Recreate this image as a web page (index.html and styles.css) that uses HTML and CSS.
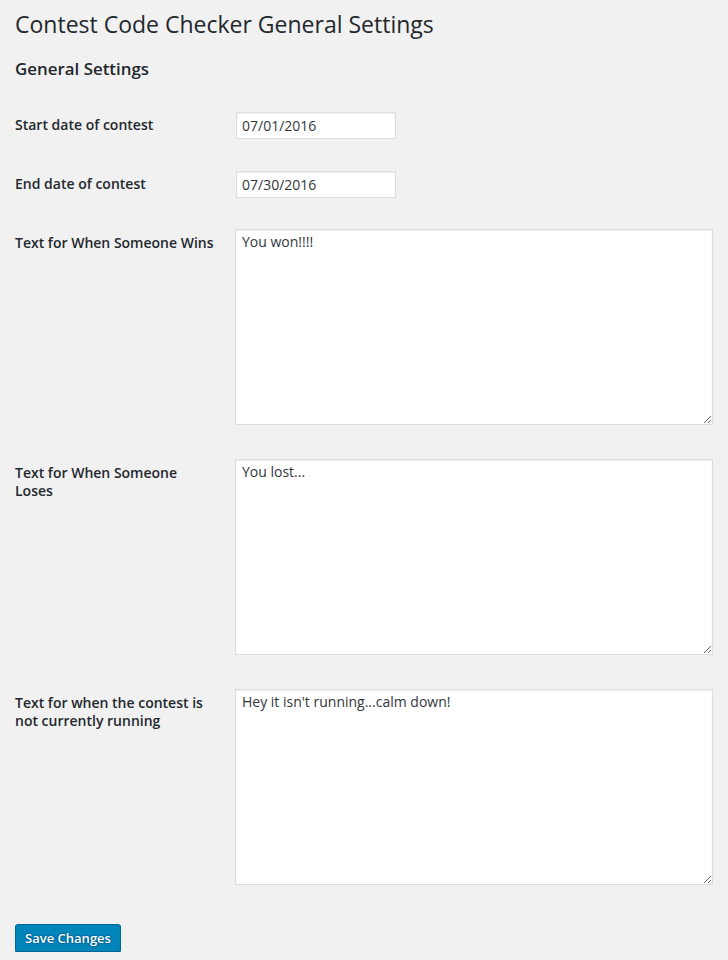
FILE: index.html
```html
<!DOCTYPE html>
<html lang="en">
<head>
<meta charset="utf-8">
<title>Contest Code Checker General Settings</title>
<link rel="stylesheet" href="styles.css">
</head>
<body>
<div class="wrap">
  <h1 class="page-title">Contest Code Checker General Settings</h1>
  <form class="settings-form">
    <h2 class="section-title">General Settings</h2>
    <div class="form-rows">
      <div class="form-row">
        <label class="field-label" for="start">Start date of contest</label>
        <input class="text-input" id="start" type="text" value="07/01/2016">
      </div>
      <div class="form-row">
        <label class="field-label" for="end">End date of contest</label>
        <input class="text-input" id="end" type="text" value="07/30/2016">
      </div>
      <div class="form-row form-row-area">
        <label class="field-label" for="win">Text for When Someone Wins</label>
        <textarea class="text-area" id="win">You won!!!!</textarea>
      </div>
      <div class="form-row form-row-area">
        <label class="field-label" for="lose">Text for When Someone Loses</label>
        <textarea class="text-area" id="lose">You lost...</textarea>
      </div>
      <div class="form-row form-row-area">
        <label class="field-label" for="idle">Text for when the contest is not currently running</label>
        <textarea class="text-area" id="idle">Hey it isn't running...calm down!</textarea>
      </div>
    </div>
    <div class="submit-row">
      <button class="button-primary" type="button">Save Changes</button>
    </div>
  </form>
</div>
</body>
</html>
```

FILE: styles.css
```css
html, body {
  margin: 0;
  padding: 0;
  background: #f1f1f1;
}

body {
  font-family: "Open Sans", "Noto Sans", sans-serif;
  color: #23282d;
  font-size: 14px;
}

.wrap {
  padding: 9px 0 0 15px;
}

.page-title {
  margin: 0;
  font-size: 23px;
  font-weight: 400;
  line-height: 30px;
  color: #23282d;
}

.settings-form {
  margin: 0;
}

.section-title {
  margin: 18px 0 0 0;
  font-size: 16.9px;
  font-weight: 600;
  line-height: 24px;
  color: #23282d;
}

.form-rows {
  margin-top: 15px;
  display: flex;
  flex-direction: column;
}

.form-row {
  display: flex;
  align-items: flex-start;
  height: 59px;
}

.form-row-area {
  height: 230px;
}

.field-label {
  flex: 0 0 200px;
  width: 200px;
  padding: 20px 20px 0 0;
  font-size: 14px;
  font-weight: 600;
  line-height: 18.2px;
  color: #23282d;
}

.text-input {
  box-sizing: border-box;
  width: 160px;
  height: 27px;
  margin: 16px 0 0 1px;
  padding: 0 5px;
  border: 1px solid #dddddd;
  background: #ffffff;
  box-shadow: inset 0 1px 2px rgba(0, 0, 0, 0.07);
  font-family: "Open Sans", "Noto Sans", sans-serif;
  font-size: 14px;
  color: #32373c;
  outline: none;
  border-radius: 0;
}

.text-area {
  box-sizing: border-box;
  width: 478px;
  height: 196px;
  margin: 15px 0 0 0;
  padding: 2px 6px;
  border: 1px solid #dddddd;
  background: #ffffff;
  box-shadow: inset 0 1px 2px rgba(0, 0, 0, 0.07);
  font-family: "Open Sans", "Noto Sans", sans-serif;
  font-size: 14px;
  line-height: 19.6px;
  color: #32373c;
  outline: none;
  border-radius: 0;
  resize: both;
}

.submit-row {
  padding-top: 20px;
}

.button-primary {
  box-sizing: border-box;
  width: 106px;
  height: 28px;
  padding: 0 0 1px;
  border: 1px solid #006799;
  border-radius: 3px;
  background: #0085ba;
  box-shadow: 0 1px 0 #006799;
  color: #ffffff;
  font-family: "Open Sans", "Noto Sans", sans-serif;
  font-size: 13px;
  font-weight: 600;
  line-height: 26px;
  text-align: center;
  text-shadow: 0 -1px 1px #006799, 1px 0 1px #006799, 0 1px 1px #006799, -1px 0 1px #006799;
  cursor: pointer;
}
```
